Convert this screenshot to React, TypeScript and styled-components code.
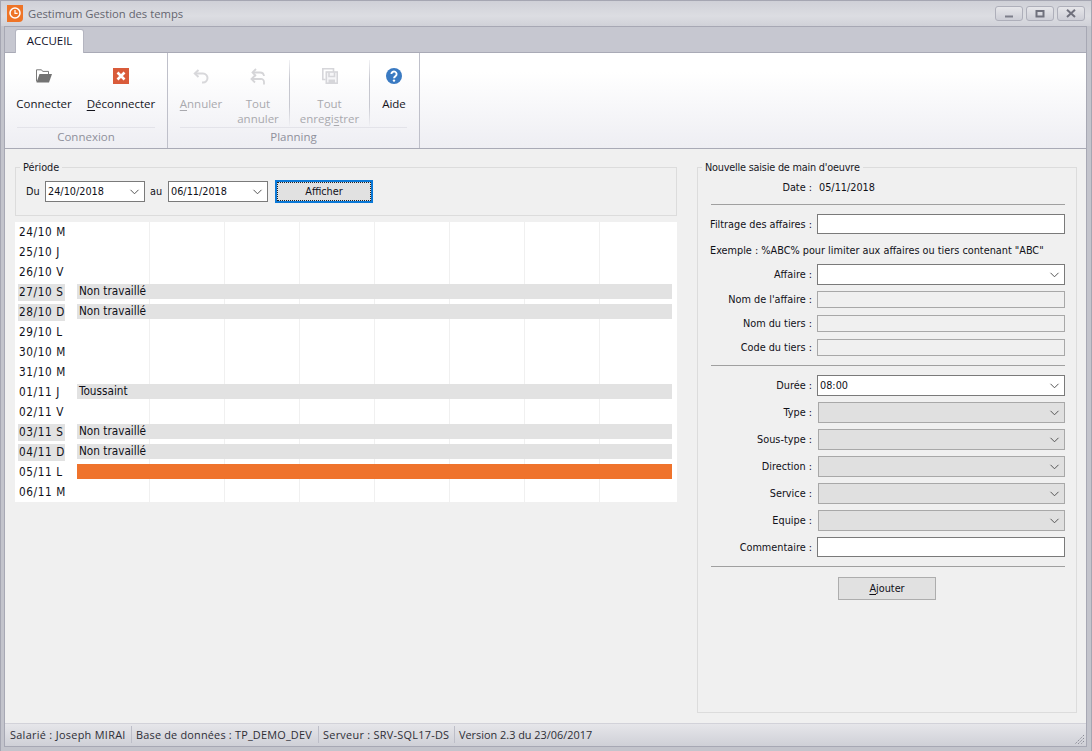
import React from "react";
import styled, { createGlobalStyle } from "styled-components";

const formFont = `"DejaVu Sans Condensed", "DejaVu Sans", sans-serif`;

const Global = createGlobalStyle`
  html, body { margin: 0; padding: 0; height: 751px; overflow: hidden; background: #bcbdc6; }
  * { box-sizing: border-box; }
  #root { font-family: "Open Sans", "Noto Sans", sans-serif; font-size: 11.5px; color: #101018; }
`;

const Window = styled.div`
  width: 1092px; height: 751px; display: flex; flex-direction: column;
  background: linear-gradient(#d2d3da, #c3c4cc 26px, #c3c4cc);
  border: 1px solid #a5a6b2; border-bottom-width: 0;
`;
const TitleBar = styled.div`
  height: 25px; flex: none; display: flex; align-items: center; padding: 0 6px 1px 6px; gap: 5px;
  background: linear-gradient(#cfd0d7, #dcdde2 60%, #d0d1d8);
`;
const TitleText = styled.div`font-size: 11.25px; color: #64656f; flex: 1;`;
const WinButtons = styled.div`display: flex; gap: 3px; margin-top: 1px;`;
const WinButton = styled.div`
  width: 28px; height: 15px; border: 1px solid #aeafba; border-radius: 3px;
  background: linear-gradient(#e6e6ea, #cdced6); display: flex; align-items: center; justify-content: center;
`;
const Inner = styled.div`
  flex: 1; min-height: 0; margin: 0 4px 4px 3px; display: flex; flex-direction: column;
  border: 1px solid #a7a8b4; background: #f0f0f0;
`;
const TabStrip = styled.div`
  height: 26px; flex: none; background: #c6c7d0; padding: 3px 0 0 11px; display: flex;
  border-bottom: 1px solid #a9aab6;
`;
const Tab = styled.div`
  width: 67px; height: 23px; background: #fff; text-align: center; line-height: 22px;
  border-radius: 2px 2px 0 0; box-shadow: 0 0 0 1px #b4b5c0; clip-path: inset(-1px -1px 0 -1px); color: #12122a;
`;
const Ribbon = styled.div`
  height: 96px; flex: none; display: flex; border-bottom: 1px solid #a9aab6;
  background: linear-gradient(#ffffff, #ffffff 20%, #eeeef3);
`;
const Group = styled.div<{ $w: number }>`
  width: ${(p) => p.$w}px; flex: none; border-right: 1px solid #bfc0ca; display: flex; flex-direction: column;
`;
const GroupTail = styled.div`flex: 1;`;
const GroupBody = styled.div<{ $pad: number }>`
  height: 74px; display: flex; padding-left: ${(p) => p.$pad}px;
`;
const RibbonBtn = styled.div<{ $w: number; $off?: boolean }>`
  width: ${(p) => p.$w}px; flex: none; display: flex; flex-direction: column; align-items: center; padding-top: 11px;
  color: ${(p) => (p.$off ? "#a9a9ae" : "#14141c")}; text-align: center; line-height: 15px;
`;
const IconSlot = styled.div`height: 24px; margin-bottom: 8px; display: flex; align-items: center; justify-content: center;`;
const RibbonSep = styled.div`width: 1px; height: 66px; margin: 7px 0 0 0; background: linear-gradient(#f2f2f5, #c4c5cd 30%, #c8c9d1 70%, #f0f0f4); flex: none;`;
const Spacer = styled.div<{ $w: number }>`width: ${(p) => p.$w}px; flex: none;`;
const Caption = styled.div`
  margin: 1px 12px 0; height: 21px; flex: none; text-align: center; line-height: 17px; color: #8f909b;
  border-top: 1px solid #e3e3e9;
`;
const Mn = styled.span`text-decoration: underline; text-underline-offset: 2px;`;

const Content = styled.div`
  flex: 1; min-height: 0; display: flex; padding: 18px 9px 10px 10px; justify-content: space-between; background: #f0f0f0;
  font-family: ${formFont}; font-size: 10.8px;
`;
const LeftCol = styled.div`width: 662px; display: flex; flex-direction: column;`;
const Frame = styled.div<{ $h?: number }>`
  border: 1px solid #dcdcdc; position: relative; ${(p) => (p.$h ? `height: ${p.$h}px;` : "")}
`;
const Legend = styled.div<{ $ls?: number }>`
  position: absolute; top: -7px; left: 4px; padding: 0 3px; background: #f0f0f0; line-height: 14px; color: #18181f;
  letter-spacing: ${(p) => p.$ls ?? 0}px; white-space: nowrap;
`;
const PeriodRow = styled.div`
  display: flex; padding: 13px 0 0 10px; height: 100%; align-items: flex-start;
`;
const PeriodLabel = styled.div<{ $w: number; $pad?: number }>`
  width: ${(p) => p.$w}px; padding-left: ${(p) => p.$pad ?? 0}px; line-height: 21px;
`;
const Select = styled.div<{ $w?: number; $off?: boolean }>`
  height: 21px; width: ${(p) => (p.$w ? `${p.$w}px` : "100%")}; display: flex; align-items: center; justify-content: space-between;
  padding: 0 4px 0 2px; background: ${(p) => (p.$off ? "#e0e0e0" : "#fff")}; border: 1px solid ${(p) => (p.$off ? "#a8a8a8" : "#7a7a7a")};
`;
const Focus = styled.div`
  margin-left: 7px; width: 98px; height: 23px; margin-top: -1px; border: 2px solid #0a78d7; background: #e1e1e1;
  display: flex; align-items: center; justify-content: center; outline: 1px dotted #222; outline-offset: -3px;
`;
const Planning = styled.div`
  margin-top: 6px; height: 280px; background: #fff; display: flex; flex-direction: column; position: relative; width: 662px;
`;
const GridLines = styled.div`
  position: absolute; inset: 0 0 0 134px; display: grid; grid-template-columns: repeat(7, 75px);
`;
const GridLine = styled.div`border-left: 1px solid #f0f0f0;`;
const DayRow = styled.div`height: 20px; flex: none; display: flex; align-items: center; position: relative; padding-left: 3px;`;
const DayLabel = styled.div<{ $off?: boolean }>`
  width: 47px; height: 17px; padding-left: 1px; line-height: 17px; font-size: 11.7px; letter-spacing: .6px; flex: none; white-space: nowrap;
  background: ${(p) => (p.$off ? "#e2e2e2" : "transparent")};
`;
const Bar = styled.div<{ $color: string }>`
  margin: 0 0 1px 12px; width: 595px; height: 15px; background: ${(p) => p.$color}; padding-left: 2px; line-height: 14px; font-size: 11.7px;
`;
const RightFrame = styled.div`
  width: 380px; border: 1px solid #dcdcdc; position: relative; display: flex; flex-direction: column; padding: 0 11px 0 13px;
`;
const Row = styled.div<{ $h: number; $mt: number }>`
  height: ${(p) => p.$h}px; margin-top: ${(p) => p.$mt}px; display: flex; align-items: center; flex: none;
`;
const Label = styled.div`width: 101px; display: flex; justify-content: flex-end; white-space: nowrap; flex: none; margin-right: 5px;`;
const DateValue = styled.div`padding-left: 2px;`;
const Ctrl = styled.div<{ $off?: boolean }>`flex: 1; min-width: 0; height: 100%; display: flex; margin-left: ${(p) => (p.$off ? 1 : 0)}px;`;
const TextInput = styled.div`width: 100%; height: 100%; background: #fff; border: 1px solid #7a7a7a;`;
const ReadOnly = styled.div`width: 100%; height: 100%; background: #f0f0f0; border: 1px solid #a8a8a8;`;
const Rule = styled.div<{ $mt: number }>`height: 1px; background: #a0a0a0; margin-top: ${(p) => p.$mt}px; flex: none;`;
const Hint = styled.div`margin: 9px 0 0 -1px; height: 15px; line-height: 15px; white-space: nowrap; flex: none;`;
const AddWrap = styled.div`display: flex; margin-top: 10px; padding-left: 127px;`;
const AddBtn = styled.div`
  width: 98px; height: 23px; background: #e1e1e1; border: 1px solid #adadad; text-align: center; line-height: 21px;
`;
const StatusBar = styled.div`
  height: 23px; flex: none; display: flex; align-items: center; position: relative; padding: 0 0 2px 5px;
  background: linear-gradient(#e6e6ea, #cfd0d7); border-top: 1px solid #d2d2d9; color: #2e2e36; font-size: 10.9px;
`;
const StatusItem = styled.div<{ $w: number; $ls?: number }>`
  width: ${(p) => p.$w}px; height: 17px; line-height: 17px; white-space: nowrap; flex: none; letter-spacing: ${(p) => p.$ls ?? 0}px;
`;
const StatusSep = styled.div`width: 1px; height: 17px; background: #bdbec8; flex: none; margin: 0 4px 0 4px;`;
const Grip = styled.svg`position: absolute; right: 1px; bottom: 1px;`;

const Chevron = () => (
  <svg width="11" height="6" viewBox="0 0 11 6"><path d="M1.5 .8 5.5 4.8 9.5 .8" fill="none" stroke="#555" strokeWidth="1" /></svg>
);

const days: [string, boolean, string?, string?][] = [
  ["24/10 M", false], ["25/10 J", false], ["26/10 V", false],
  ["27/10 S", true, "Non travaillé", "#e2e2e2"], ["28/10 D", true, "Non travaillé", "#e2e2e2"],
  ["29/10 L", false], ["30/10 M", false], ["31/10 M", false],
  ["01/11 J", false, "Toussaint", "#e2e2e2"], ["02/11 V", false],
  ["03/11 S", true, "Non travaillé", "#e2e2e2"], ["04/11 D", true, "Non travaillé", "#e2e2e2"],
  ["05/11 L", false, "", "#ef732c"], ["06/11 M", false],
];

const selects: [string, boolean, string][] = [
  ["Durée :", false, "08:00"], ["Type :", true, ""], ["Sous-type :", true, ""],
  ["Direction :", true, ""], ["Service :", true, ""], ["Equipe :", true, ""],
];

export default function App() {
  return (
    <Window>
      <Global />
      <TitleBar>
        <svg width="16" height="17" viewBox="0 0 16 17">
          <path d="M0 0h16v13q0 4-4 4H0z" fill="#ee7427" />
          <circle cx="8" cy="8" r="5" fill="none" stroke="#fff" strokeWidth="1.5" />
          <path d="M8 5v3.4h2.6" fill="none" stroke="#fff" strokeWidth="1.2" />
        </svg>
        <TitleText>Gestimum Gestion des temps</TitleText>
        <WinButtons>
          <WinButton><svg width="10" height="9" viewBox="0 0 10 9"><path d="M1 7.5h8" stroke="#7d7e8a" strokeWidth="2" /></svg></WinButton>
          <WinButton><svg width="10" height="8" viewBox="0 0 10 8"><rect x="1.5" y="1" width="7" height="5.5" fill="none" stroke="#6f707c" strokeWidth="2" /></svg></WinButton>
          <WinButton><svg width="10" height="9" viewBox="0 0 10 9"><path d="M1 .8 9 8M9 .8 1 8" stroke="#6f707c" strokeWidth="2" /></svg></WinButton>
        </WinButtons>
      </TitleBar>
      <Inner>
        <TabStrip><Tab>ACCUEIL</Tab></TabStrip>
        <Ribbon>
          <Group $w={163}>
            <GroupBody $pad={5}>
              <RibbonBtn $w={68}>
                <IconSlot>
                  <svg width="16" height="14" viewBox="0 0 16 14">
                    <path d="M.5 12.5V.8h5l1.2 1.6h5.8v2.6" fill="#fff" stroke="#7a7a7a" strokeWidth="1" />
                    <path d="M.5 13.5 3.5 5H16l-3 8.5z" fill="#737373" />
                  </svg>
                </IconSlot>
                Connecter
              </RibbonBtn>
              <Spacer $w={5} />
              <RibbonBtn $w={76}>
                <IconSlot>
                  <svg width="16" height="16" viewBox="0 0 16 16">
                    <rect width="16" height="16" fill="#d95b3a" />
                    <path d="M4.5 4.5l7 7M11.5 4.5l-7 7" stroke="#fff" strokeWidth="2.6" />
                  </svg>
                </IconSlot>
                <span><Mn>D</Mn>éconnecter</span>
              </RibbonBtn>
            </GroupBody>
            <Caption>Connexion</Caption>
            <GroupTail />
          </Group>
          <Group $w={252}>
            <GroupBody $pad={5}>
              <RibbonBtn $w={56} $off>
                <IconSlot>
                  <svg width="16" height="15" viewBox="0 0 16 15" fill="none" stroke="#d8d8db" strokeWidth="2">
                    <path d="M5.5 1 1.8 4.5 5.5 8" />
                    <path d="M2.2 4.5H10a4.5 4.5 0 0 1 4.5 4.6A4.5 4.5 0 0 1 10 13.5H9" />
                  </svg>
                </IconSlot>
                <span><Mn>A</Mn>nnuler</span>
              </RibbonBtn>
              <RibbonBtn $w={58} $off>
                <IconSlot>
                  <svg width="16" height="17" viewBox="0 0 16 17" fill="none" stroke="#d5d5d8" strokeWidth="1.8">
                    <path d="M6 1 2.5 4.5 6 8" />
                    <path d="M3 4.5h7a4 4 0 0 1 4 3.5" />
                    <path d="M5 7.5 1.5 11 5 14.5" />
                    <path d="M2 11h8.5a3 3 0 0 1 3.5 3v2.5" />
                  </svg>
                </IconSlot>
                Tout<br />annuler
              </RibbonBtn>
              <Spacer $w={2} />
              <RibbonSep />
              <RibbonBtn $w={79} $off>
                <IconSlot>
                  <svg width="16" height="16" viewBox="0 0 16 16" fill="none" stroke="#d6d6da" strokeWidth="1.6">
                    <path d="M3.5 11.5H.8V.8h10.7V4" />
                    <rect x="4.3" y="4" width="11" height="11.2" fill="#f6f6f8" />
                    <path d="M7 4.5v4h5.5v-4" />
                    <rect x="6.5" y="11.5" width="6.5" height="3.5" fill="#d6d6da" stroke="none" />
                  </svg>
                </IconSlot>
                <span>Tout<br />enregi<Mn>s</Mn>trer</span>
              </RibbonBtn>
              <RibbonSep />
              <RibbonBtn $w={48}>
                <IconSlot>
                  <svg width="16" height="16" viewBox="0 0 16 16">
                    <circle cx="8" cy="8" r="8" fill="#3a7ac2" />
                    <path d="M5.4 6a2.6 2.6 0 1 1 4.2 2.1C8.6 8.8 8 9.2 8 10.2" fill="none" stroke="#fff" strokeWidth="1.9" />
                    <circle cx="8" cy="12.6" r="1.2" fill="#fff" />
                  </svg>
                </IconSlot>
                Aide
              </RibbonBtn>
            </GroupBody>
            <Caption>Planning</Caption>
            <GroupTail />
          </Group>
        </Ribbon>
        <Content>
          <LeftCol>
            <Frame $h={49}>
              <Legend>Période</Legend>
              <PeriodRow>
                <PeriodLabel $w={19}>Du</PeriodLabel>
                <Select $w={100}>24/10/2018<Chevron /></Select>
                <PeriodLabel $w={23} $pad={5}>au</PeriodLabel>
                <Select $w={100}>06/11/2018<Chevron /></Select>
                <Focus>Afficher</Focus>
              </PeriodRow>
            </Frame>
            <Planning>
              <GridLines>{Array.from({ length: 7 }, (_, i) => <GridLine key={i} />)}</GridLines>
              {days.map(([d, off, text, color]) => (
                <DayRow key={d}>
                  <DayLabel $off={off}>{d}</DayLabel>
                  {color && <Bar $color={color}>{text}</Bar>}
                </DayRow>
              ))}
            </Planning>
          </LeftCol>
          <RightFrame>
            <Legend $ls={-0.2}>Nouvelle saisie de main d'oeuvre</Legend>
            <Row $h={14} $mt={12}><Label>Date :</Label><DateValue>05/11/2018</DateValue></Row>
            <Rule $mt={10} />
            <Row $h={20} $mt={9}><Label>Filtrage des affaires :</Label><Ctrl><TextInput /></Ctrl></Row>
            <Hint>Exemple : %ABC% pour limiter aux affaires ou tiers contenant "ABC"</Hint>
            <Row $h={20} $mt={6}><Label>Affaire :</Label><Ctrl><Select>&nbsp;<Chevron /></Select></Ctrl></Row>
            <Row $h={17} $mt={7}><Label>Nom de l'affaire :</Label><Ctrl><ReadOnly /></Ctrl></Row>
            <Row $h={17} $mt={7}><Label>Nom du tiers :</Label><Ctrl><ReadOnly /></Ctrl></Row>
            <Row $h={17} $mt={7}><Label>Code du tiers :</Label><Ctrl><ReadOnly /></Ctrl></Row>
            <Rule $mt={9} />
            {selects.map(([l, off, v], i) => (
              <Row key={l} $h={20} $mt={i === 0 ? 9 : 7}>
                <Label>{l}</Label>
                <Ctrl $off={off}><Select $off={off}>{v || "\u00a0"}<Chevron /></Select></Ctrl>
              </Row>
            ))}
            <Row $h={20} $mt={7}><Label>Commentaire :</Label><Ctrl><TextInput /></Ctrl></Row>
            <Rule $mt={9} />
            <AddWrap><AddBtn><Mn>A</Mn>jouter</AddBtn></AddWrap>
          </RightFrame>
        </Content>
        <StatusBar>
          <StatusItem $w={117} $ls={0.3}>Salarié : Joseph MIRAI</StatusItem><StatusSep />
          <StatusItem $w={178} $ls={0.2}>Base de données : TP_DEMO_DEV</StatusItem><StatusSep />
          <StatusItem $w={127} $ls={0.27}>Serveur : SRV-SQL17-DS</StatusItem><StatusSep />
          <StatusItem $w={200}>Version 2.3 du 23/06/2017</StatusItem>
          <Grip width="11" height="11" viewBox="0 0 11 11">
            <path d="M10 1 1 10M10 4 4 10M10 7 7 10" stroke="#8a8b96" strokeWidth="1" strokeDasharray="1.4 1" fill="none" />
          </Grip>
        </StatusBar>
      </Inner>
    </Window>
  );
}
